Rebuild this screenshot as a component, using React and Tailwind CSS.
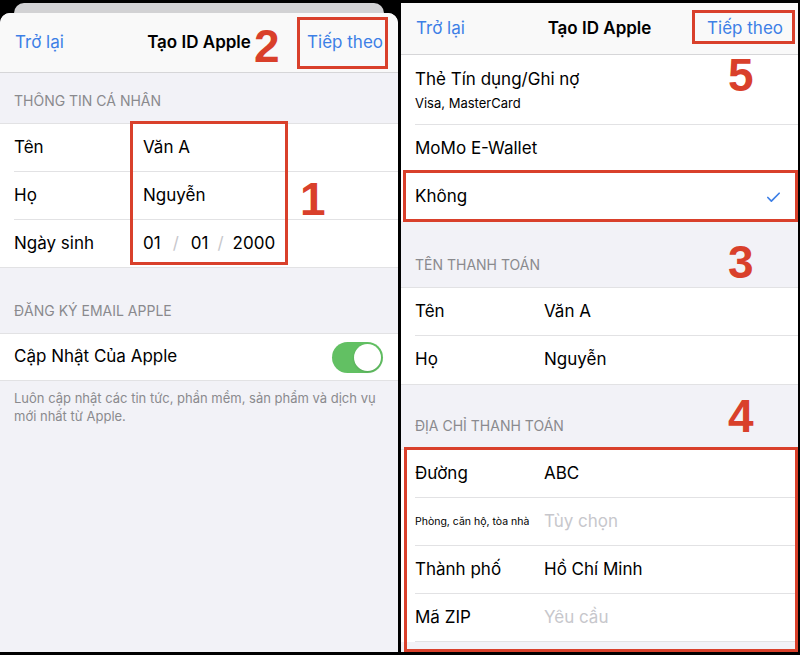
import { Check } from 'lucide-react';

const font = { fontFamily: 'Inter, "Noto Sans", sans-serif' };

function NavBar({ className }) {
    return (
        <div className={`grid grid-cols-[1fr_auto_1fr] items-center bg-[#f9f9f9] border-b border-[#d6d6d8] px-[15px] text-[17px] ${className}`}>
            <span className="text-[#3d7fe6]">Trở lại</span>
            <span className="font-semibold text-black">Tạo ID Apple</span>
            <span className="text-right text-[#3d7fe6]">Tiếp theo</span>
        </div>
    );
}

function SectionHeader({ children, className = 'h-[66px] pb-[13px]' }) {
    return (
        <div className={`flex items-end px-[14px] text-[14px] text-[#8a8a8e] uppercase ${className}`}>
            {children}
        </div>
    );
}

function Row({ label, value, labelW = 'w-[129px]', last, small, placeholder }) {
    return (
        <div className="pl-[14px] bg-white">
            <div className={`flex items-center h-[48px] ${last ? '' : 'border-b border-[#e2e2e4]'}`}>
                <span className={`${labelW} shrink-0 whitespace-nowrap ${small ? 'text-[10.5px]' : 'text-[17px]'} text-black`}>{label}</span>
                <span className={`text-[17px] ${placeholder ? 'text-[#c7c7cc]' : 'text-black'}`}>{value}</span>
            </div>
        </div>
    );
}

function Badge({ n, className }) {
    return (
        <span
            className={`absolute text-[46px] leading-none font-bold text-[#d9402b] ${className}`}
            style={{ fontFamily: '"Liberation Sans", Arial, sans-serif' }}
        >
            {n}
        </span>
    );
}

function LeftPanel() {
    return (
        <div className="relative w-[398px] h-[652px] flex flex-col bg-black">
            <div className="h-[13px] pt-[3px] px-[14px]">
                <div className="h-[10px] rounded-t-[10px] bg-[#d2d2d4]"></div>
            </div>
            <div className="flex-1 flex flex-col rounded-t-[10px] overflow-hidden bg-[#f2f2f7]">
                <NavBar className="h-[60px]" />
                <SectionHeader className="h-[50px] pb-[12px]">Thông tin cá nhân</SectionHeader>
                <div className="bg-white border-y border-[#e2e2e4]">
                    <Row label="Tên" value="Văn A" />
                    <Row label="Họ" value="Nguyễn" />
                    <div className="pl-[14px]">
                        <div className="flex items-center h-[47px] text-[17px]">
                            <span className="w-[129px]">Ngày sinh</span>
                            <span>01</span>
                            <span className="px-[12px] text-[#c7c7cc]">/</span>
                            <span>01</span>
                            <span className="px-[9px] text-[#c7c7cc]">/</span>
                            <span>2000</span>
                        </div>
                    </div>
                </div>
                <SectionHeader className="h-[65px] pb-[12px]">Đăng ký email Apple</SectionHeader>
                <div className="bg-white border-y border-[#e2e2e4] h-[48px] flex items-center justify-between pl-[14px] pr-[15px]">
                    <span className="text-[17px]">Cập Nhật Của Apple</span>
                    <div className="w-[51px] h-[31px] rounded-full bg-[#62c063] p-[2px] flex justify-end">
                        <div className="w-[27px] h-[27px] rounded-full bg-white shadow"></div>
                    </div>
                </div>
                <p className="px-[14px] pt-[8px] text-[13px] leading-[18px] text-[#8a8a8e]">
                    Luôn cập nhật các tin tức, phần mềm, sản phẩm và dịch vụ mới nhất từ Apple.
                </p>
            </div>
            <Badge n="2" className="left-[254px] top-[23px]" />
            <div className="absolute left-[297px] top-[17px] w-[91px] h-[52px] border-[3px] border-[#d9402b]"></div>
            <div className="absolute left-[130px] top-[121px] w-[158px] h-[144px] border-[3px] border-[#d9402b]"></div>
            <Badge n="1" className="left-[300px] top-[176px]" />
        </div>
    );
}

function RightPanel() {
    return (
        <div className="relative w-[397px] h-[652px] flex flex-col bg-black">
            <div className="h-[3px]"></div>
            <div className="flex-1 flex flex-col bg-[#f2f2f7] overflow-hidden">
                <NavBar className="h-[52px]" />
                <div className="bg-white">
                    <div className="pl-[14px]">
                        <div className="h-[70px] flex flex-col justify-center border-b border-[#e2e2e4]">
                            <span className="text-[17px] leading-[22px]">Thẻ Tín dụng/Ghi nợ</span>
                            <span className="text-[13px] leading-[18px] mt-[4px]">Visa, MasterCard</span>
                        </div>
                    </div>
                    <Row label="MoMo E-Wallet" value="" labelW="w-auto" />
                    <div className="pl-[14px] pr-[16px] h-[48px] flex items-center justify-between">
                        <span className="text-[17px]">Không</span>
                        <Check size={17} strokeWidth={2.4} className="text-[#3d7fe6]" />
                    </div>
                </div>
                <SectionHeader className="h-[66px] pb-[12px]">Tên thanh toán</SectionHeader>
                <div className="bg-white border-y border-[#e2e2e4]">
                    <Row label="Tên" value="Văn A" />
                    <Row label="Họ" value="Nguyễn" last />
                </div>
                <SectionHeader className="h-[64px] pb-[13px]">Địa chỉ thanh toán</SectionHeader>
                <div className="bg-white border-t border-[#e2e2e4]">
                    <Row label="Đường" value="ABC" />
                    <Row label="Phòng, căn hộ, tòa nhà" value="Tùy chọn" small placeholder />
                    <Row label="Thành phố" value="Hồ Chí Minh" />
                    <Row label="Mã ZIP" value="Yêu cầu" placeholder />
                </div>
            </div>
            <div className="absolute left-[291px] top-[10px] w-[103px] h-[34px] border-[3px] border-[#d9402b]"></div>
            <Badge n="5" className="left-[327px] top-[52px]" />
            <div className="absolute left-[2px] top-[170px] w-[395px] h-[52px] border-[3px] border-[#d9402b]"></div>
            <Badge n="3" className="left-[327px] top-[239px]" />
            <Badge n="4" className="left-[327px] top-[393px]" />
            <div className="absolute left-[3px] top-[447px] w-[394px] h-[205px] border-[3px] border-[#d9402b]"></div>
        </div>
    );
}

export default function App() {
    return (
        <div className="w-[800px] h-[655px] bg-black flex gap-[3px] overflow-hidden" style={font}>
            <LeftPanel />
            <RightPanel />
        </div>
    );
}
